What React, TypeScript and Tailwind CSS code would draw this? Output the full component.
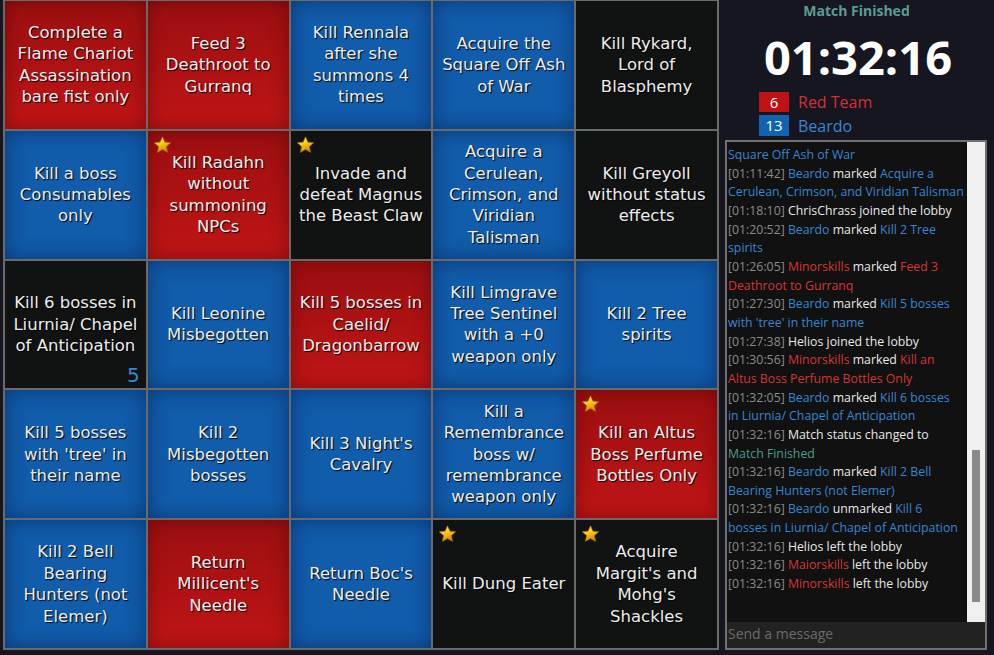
import { useId } from "react";

type Tone = "red" | "blue" | "black";

type Cell = { text: string; tone: Tone; star?: boolean; count?: number };

const cells: Cell[] = [
  { text: "Complete a\nFlame Chariot\nAssassination\nbare fist only", tone: "red" },
  { text: "Feed 3\nDeathroot to\nGurranq", tone: "red" },
  { text: "Kill Rennala\nafter she\nsummons 4\ntimes", tone: "blue" },
  { text: "Acquire the\nSquare Off Ash\nof War", tone: "blue" },
  { text: "Kill Rykard,\nLord of\nBlasphemy", tone: "black" },

  { text: "Kill a boss\nConsumables\nonly", tone: "blue" },
  { text: "Kill Radahn\nwithout\nsummoning\nNPCs", tone: "red", star: true },
  { text: "Invade and\ndefeat Magnus\nthe Beast Claw", tone: "black", star: true },
  { text: "Acquire a\nCerulean,\nCrimson, and\nViridian\nTalisman", tone: "blue" },
  { text: "Kill Greyoll\nwithout status\neffects", tone: "black" },

  { text: "Kill 6 bosses in\nLiurnia/ Chapel\nof Anticipation", tone: "black", count: 5 },
  { text: "Kill Leonine\nMisbegotten", tone: "blue" },
  { text: "Kill 5 bosses in\nCaelid/\nDragonbarrow", tone: "red" },
  { text: "Kill Limgrave\nTree Sentinel\nwith a +0\nweapon only", tone: "blue" },
  { text: "Kill 2 Tree\nspirits", tone: "blue" },

  { text: "Kill 5 bosses\nwith 'tree' in\ntheir name", tone: "blue" },
  { text: "Kill 2\nMisbegotten\nbosses", tone: "blue" },
  { text: "Kill 3 Night's\nCavalry", tone: "blue" },
  { text: "Kill a\nRemembrance\nboss w/\nremembrance\nweapon only", tone: "blue" },
  { text: "Kill an Altus\nBoss Perfume\nBottles Only", tone: "red", star: true },

  { text: "Kill 2 Bell\nBearing\nHunters (not\nElemer)", tone: "blue" },
  { text: "Return\nMillicent's\nNeedle", tone: "red" },
  { text: "Return Boc's\nNeedle", tone: "blue" },
  { text: "Kill Dung Eater", tone: "black", star: true },
  { text: "Acquire\nMargit's and\nMohg's\nShackles", tone: "black", star: true },
];

const toneClass: Record<Tone, string> = {
  red: "bg-gradient-to-b from-[#9c0f10] to-[#c01516] shadow-[inset_0_0_18px_rgba(60,0,0,0.45)]",
  blue: "bg-[#115cab] shadow-[inset_0_0_20px_rgba(0,20,60,0.5)]",
  black: "bg-[#111313]",
};

function Star() {
  const id = useId();
  return (
    <svg width="19" height="18" viewBox="0 0 24 23" className="absolute left-[5px] top-[5px]">
      <defs>
        <linearGradient id={id} x1="0" y1="0" x2="0.4" y2="1">
          <stop offset="0" stopColor="#fff6a0" />
          <stop offset="0.45" stopColor="#ffd21e" />
          <stop offset="1" stopColor="#d98a00" />
        </linearGradient>
      </defs>
      <path
        d="M12 1l3.1 6.9 7.4.7-5.6 5 1.7 7.4L12 17.2 5.4 21l1.7-7.4-5.6-5 7.4-.7z"
        fill={`url(#${id})`}
        stroke="#a86a00"
        strokeWidth="0.8"
        strokeLinejoin="round"
      />
    </svg>
  );
}

type Seg = [string, string];

const C = {
  ts: "text-[#8c8c8c]",
  blue: "text-[#3a85d0]",
  red: "text-[#d43636]",
  white: "text-[#e8e8e8]",
  teal: "text-[#4d9a90]",
};

// line breaks follow the wrapping in the log panel
const log: Seg[][] = [
  [["Square Off Ash of War", C.blue]],
  [["[01:11:42] ", C.ts], ["Beardo", C.blue], [" marked ", C.white], ["Acquire a\nCerulean, Crimson, and Viridian Talisman", C.blue]],
  [["[01:18:10] ", C.ts], ["ChrisChrass joined the lobby", C.white]],
  [["[01:20:52] ", C.ts], ["Beardo", C.blue], [" marked ", C.white], ["Kill 2 Tree\nspirits", C.blue]],
  [["[01:26:05] ", C.ts], ["Minorskills", C.red], [" marked ", C.white], ["Feed 3\nDeathroot to Gurranq", C.red]],
  [["[01:27:30] ", C.ts], ["Beardo", C.blue], [" marked ", C.white], ["Kill 5 bosses\nwith 'tree' in their name", C.blue]],
  [["[01:27:38] ", C.ts], ["Helios joined the lobby", C.white]],
  [["[01:30:56] ", C.ts], ["Minorskills", C.red], [" marked ", C.white], ["Kill an\nAltus Boss Perfume Bottles Only", C.red]],
  [["[01:32:05] ", C.ts], ["Beardo", C.blue], [" marked ", C.white], ["Kill 6 bosses\nin Liurnia/ Chapel of Anticipation", C.blue]],
  [["[01:32:16] ", C.ts], ["Match status changed to\n", C.white], ["Match Finished", C.teal]],
  [["[01:32:16] ", C.ts], ["Beardo", C.blue], [" marked ", C.white], ["Kill 2 Bell\nBearing Hunters (not Elemer)", C.blue]],
  [["[01:32:16] ", C.ts], ["Beardo", C.blue], [" unmarked ", C.white], ["Kill 6\nbosses in Liurnia/ Chapel of Anticipation", C.blue]],
  [["[01:32:16] ", C.ts], ["Helios left the lobby", C.white]],
  [["[01:32:16] ", C.ts], ["Maiorskills", C.red], [" left the lobby", C.white]],
  [["[01:32:16] ", C.ts], ["Minorskills", C.red], [" left the lobby", C.white]],
];

export default function App() {
  return (
    <div className="flex w-[994px] h-[655px] overflow-hidden bg-[#161620]">
      {/* Board */}
      <div className="pl-[3px]">
        <div className="grid grid-cols-5 grid-rows-5 gap-[2px] p-[2px] w-[716px] h-[651px] -mt-[1px] bg-[#6a6a6a] font-['DejaVu_Sans',sans-serif]">
          {cells.map((c, i) => (
            <div
              key={i}
              className={`relative flex items-center justify-center text-center whitespace-pre-line text-[16.5px] leading-[21.4px] text-[#ececec] [text-shadow:1px_1px_1px_#000] ${toneClass[c.tone]}`}
            >
              {c.star && <Star />}
              <span>{c.text}</span>
              {c.count !== undefined && (
                <span className="absolute right-[6px] bottom-[3px] text-[20px] leading-none text-[#3a85d0] [text-shadow:none]">
                  {c.count}
                </span>
              )}
            </div>
          ))}
        </div>
      </div>

      {/* Side panel */}
      <div className="flex-1 flex flex-col font-['Open_Sans',sans-serif]">
        <div className="text-center text-[14px] font-bold text-[#5a9d95] pt-[1px] leading-[20px]">Match Finished</div>
        <div className="text-center text-[47px] font-bold text-white leading-[56px] mt-[8px] ml-[3px]">01:32:16</div>
        <div className="pl-[40px] mt-[7px] flex flex-col gap-[3px]">
          <div className="flex items-center gap-[9px]">
            <div className="w-[30px] h-[20px] bg-[#c01212] text-white text-[15px] leading-[20px] text-center">6</div>
            <span className="text-[16px] text-[#d23232] leading-[20px]">Red Team</span>
          </div>
          <div className="flex items-center gap-[9px]">
            <div className="w-[30px] h-[21px] bg-[#1262b2] text-white text-[15px] leading-[21px] text-center">13</div>
            <span className="text-[16px] text-[#3a85d0] leading-[20px]">Beardo</span>
          </div>
        </div>

        {/* Chat */}
        <div className="flex-1 ml-[6px] mr-[7px] mt-[4px] mb-[5px] border-2 border-[#707070] bg-[#111111] flex flex-col min-h-0">
          <div className="flex-1 flex min-h-0">
            <div className="flex-1 overflow-hidden pl-[1px] pt-[4px] text-[12.3px] leading-[18.65px]">
              {log.map((line, i) => (
                <div key={i} className="whitespace-pre">
                  {line.map(([t, cls], j) => (
                    <span key={j} className={cls}>{t}</span>
                  ))}
                </div>
              ))}
            </div>
            <div className="w-[18px] bg-[#f0f0f0] flex justify-center">
              <div className="w-[8px] h-[152px] mt-[308px] bg-[#8a8a8a]" />
            </div>
          </div>
          <div className="h-[26px] bg-[#222222] flex items-center pl-[1px] pb-[3px] text-[14px] text-[#6a6a6a]">Send a message</div>
        </div>
      </div>
    </div>
  );
}
